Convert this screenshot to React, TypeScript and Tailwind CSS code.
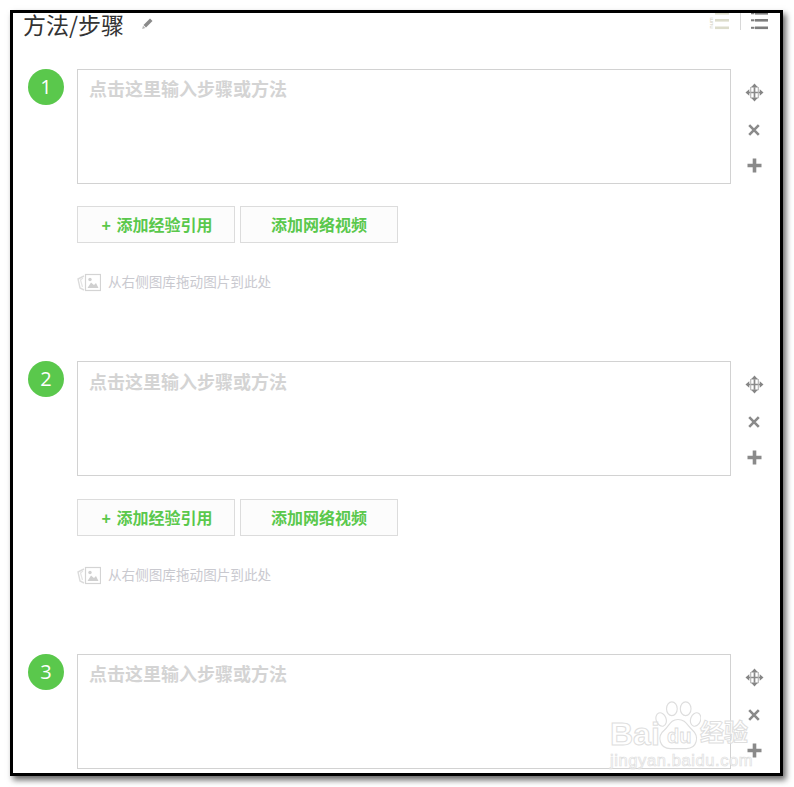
const cjk = "font-['Liberation_Sans','Noto_Sans_CJK_SC',sans-serif]";

function Pencil() {
  return (
    <svg width="13" height="13" viewBox="0 0 13 13" className="ml-[17px] mt-[-2px]">
      <path d="M9 1.5 L11.5 4 L5 10.5 L2.5 8 Z" fill="#8a8a8a" />
      <path d="M2 8.8 L4.3 11 L1.2 12 Z" fill="#b0b0b0" />
    </svg>
  );
}

function ListLeft() {
  return (
    <div className="relative w-[20px] h-[20px]">
      <span className="absolute left-[-6px] top-[7px] w-[16px] text-center text-[6px] leading-[6px] text-[#cfcfc0] -rotate-90">num</span>
      <svg width="14" height="20" viewBox="0 0 14 20" className="absolute left-[6px] top-0">
        <rect x="0" y="-1" width="14" height="2.6" fill="#dcdccb" />
        <rect x="0" y="6" width="14" height="2.6" fill="#dcdccb" />
        <rect x="0" y="13.5" width="14" height="2.6" fill="#dcdccb" />
      </svg>
    </div>
  );
}

function ListRight() {
  return (
    <svg width="17" height="20" viewBox="0 0 17 20" className="block">
      {[-1, 6, 13.5].map((y) => (
        <g key={y}>
          <rect x="0" y={y + 0.3} width="3.4" height="2" fill="#7d7d7d" />
          <rect x="4" y={y} width="13" height="2.6" fill="#7d7d7d" />
        </g>
      ))}
    </svg>
  );
}

function MoveIcon() {
  return (
    <svg width="19" height="19" viewBox="0 0 20 20" fill="none">
      <path d="M10 3 V17 M3 10 H17" stroke="#8a8a8a" strokeWidth="1.8" />
      <path d="M6.5 4.2 H13.5 M6 4.2 V15.8 M14 4.2 V15.8 M6 15.8 H14" stroke="#b5b5b5" strokeWidth="1.2" />
      <path d="M10 0.5 L13.5 4.5 H6.5 Z M10 19.5 L6.5 15.5 H13.5 Z M0.5 10 L4.5 6.5 V13.5 Z M19.5 10 L15.5 13.5 V6.5 Z" fill="#858585" />
    </svg>
  );
}

function CloseIcon() {
  return (
    <svg width="12" height="12" viewBox="0 0 12 12">
      <path d="M1.2 1.2 L10.8 10.8 M10.8 1.2 L1.2 10.8" stroke="#8a8a8a" strokeWidth="2.6" />
    </svg>
  );
}

function PlusIcon() {
  return (
    <svg width="15" height="15" viewBox="0 0 15 15">
      <path d="M7.5 0.5 V14.5 M0.5 7.5 H14.5" stroke="#8a8a8a" strokeWidth="3.6" />
    </svg>
  );
}

function PictureIcon() {
  return (
    <svg width="24" height="19" viewBox="0 0 24 19" fill="none" className="block">
      <path d="M7 3 L1 6 L3 15 L7 17" stroke="#dcdcdc" strokeWidth="1.4" />
      <path d="M6 5 L3.5 7 L5.5 14" stroke="#e4e4e4" strokeWidth="1.2" />
      <rect x="8.5" y="1.5" width="15" height="16" fill="#fff" stroke="#d4d4d4" strokeWidth="1.2" />
      <circle cx="13" cy="6.5" r="1.7" fill="#d0d0d0" />
      <path d="M10.5 15 L14 9.5 L17 12 L19 10 L21.5 15 Z" fill="#d0d0d0" />
    </svg>
  );
}

function ActionButton({ children }: { children: React.ReactNode }) {
  return (
    <div className="w-[158px] h-[37px] border border-[#dcdcdc] bg-[#fcfcfc] text-center leading-[37px] text-[16px] font-bold text-[#5ac84c]">
      {children}
    </div>
  );
}

function Step({ n, height, gapClass, padClass, last }: { n: number; height?: string; gapClass?: string; padClass?: string; last?: boolean }) {
  return (
    <div className={`flex ${height ?? ""}`}>
      <div className="ml-[15px] w-[36px] h-[36px] shrink-0 rounded-full bg-[#5ac84c] text-white text-[20px] leading-[36px] text-center font-['Open_Sans',sans-serif]">
        {n}
      </div>
      <div className="ml-[13px] w-[654px] shrink-0">
        <div className={`h-[115px] border border-[#d2d2d2] pl-[11px] text-[18px] leading-[28px] font-bold text-[#d4d4d4] ${padClass ?? "pt-[6px]"}`}>
          点击这里输入步骤或方法
        </div>
        {!last && (
          <>
            <div className={`flex gap-[5px] ${gapClass ?? ""}`}>
              <ActionButton>
                <span className="pl-[2px] mr-px">+</span> 添加经验引用
              </ActionButton>
              <ActionButton>添加网络视频</ActionButton>
            </div>
            <div className="flex items-center mt-[30px] h-[19px]">
              <PictureIcon />
              <span className="ml-[7px] text-[13.6px] leading-[19px] text-[#c9c9cf]">从右侧图库拖动图片到此处</span>
            </div>
          </>
        )}
      </div>
      <div className="ml-[12px] w-[22px] flex flex-col items-center pt-[13px]">
        <div className="h-[20px] flex items-center justify-center"><MoveIcon /></div>
        <div className="h-[12px] mt-[22px] flex items-center justify-center"><CloseIcon /></div>
        <div className="h-[15px] mt-[22px] flex items-center justify-center"><PlusIcon /></div>
      </div>
    </div>
  );
}

function Watermark() {
  return (
    <div className="absolute left-[595px] top-[686px] w-[170px] h-[84px] pointer-events-none">
      <svg width="46" height="50" viewBox="0 0 60 65" fill="none" stroke="#dedede" strokeWidth="1.5" className="absolute left-[60px] top-[15px]">
        <ellipse cx="22" cy="10" rx="7" ry="9" />
        <ellipse cx="40" cy="10" rx="7" ry="9" />
        <ellipse cx="8" cy="24" rx="6.5" ry="9" transform="rotate(-20 8 24)" />
        <ellipse cx="53" cy="24" rx="6.5" ry="9" transform="rotate(20 53 24)" />
        <path d="M30 24 C20 24 19 32 12 38 C2 46 6 62 20 62 L41 62 C55 62 58 46 49 38 C42 32 40 24 30 24 Z" />
      </svg>
      <div className="absolute left-[15px] top-[30px] text-[32px] leading-[36px] font-bold text-white/60 [-webkit-text-stroke:1px_#dedede] font-['Liberation_Sans',sans-serif]">
        Bai
      </div>
      <div className="absolute left-[72px] top-[40px] text-[20px] leading-[20px] font-bold text-white/60 [-webkit-text-stroke:0.8px_#dadada] font-['Liberation_Sans',sans-serif]">
        du
      </div>
      <div className="absolute left-[105px] top-[32px] text-[24px] leading-[30px] font-bold text-white/60 [-webkit-text-stroke:1px_#dedede]">
        经验
      </div>
      <div className="absolute left-[15px] top-[64px] text-[16.5px] leading-[20px] tracking-[0.6px] text-white/60 [-webkit-text-stroke:0.7px_#dedede] font-['Liberation_Sans',sans-serif] whitespace-nowrap">
        jingyan.baidu.com
      </div>
    </div>
  );
}

export default function App() {
  return (
    <div className={`relative w-[794px] h-[787px] bg-white pl-[10px] pt-[10px] ${cjk}`}>
      <div className="relative w-[773px] h-[766px] border-[3px] border-black bg-white shadow-[3px_4px_6px_rgba(0,0,0,0.6)]">
        <div className="flex justify-between h-[56px] pl-[10px] pr-[12px]">
          <div className="flex items-center h-[22px]">
            <span className="text-[23px] leading-[22px] text-[#333] font-['Noto_Sans_CJK_SC',sans-serif] font-normal">方法/步骤</span>
            <Pencil />
          </div>
          <div className="flex items-start">
            <ListLeft />
            <div className="ml-[11px] mr-[10px] w-px h-[17px] bg-[#d8d8d8]" />
            <ListRight />
          </div>
        </div>
        <Step n={1} height="h-[292px]" gapClass="mt-[22px]" />
        <Step n={2} height="h-[293px]" gapClass="mt-[23px]" padClass="pt-[7px]" />
        <Step n={3} last />
      </div>
      <Watermark />
    </div>
  );
}
